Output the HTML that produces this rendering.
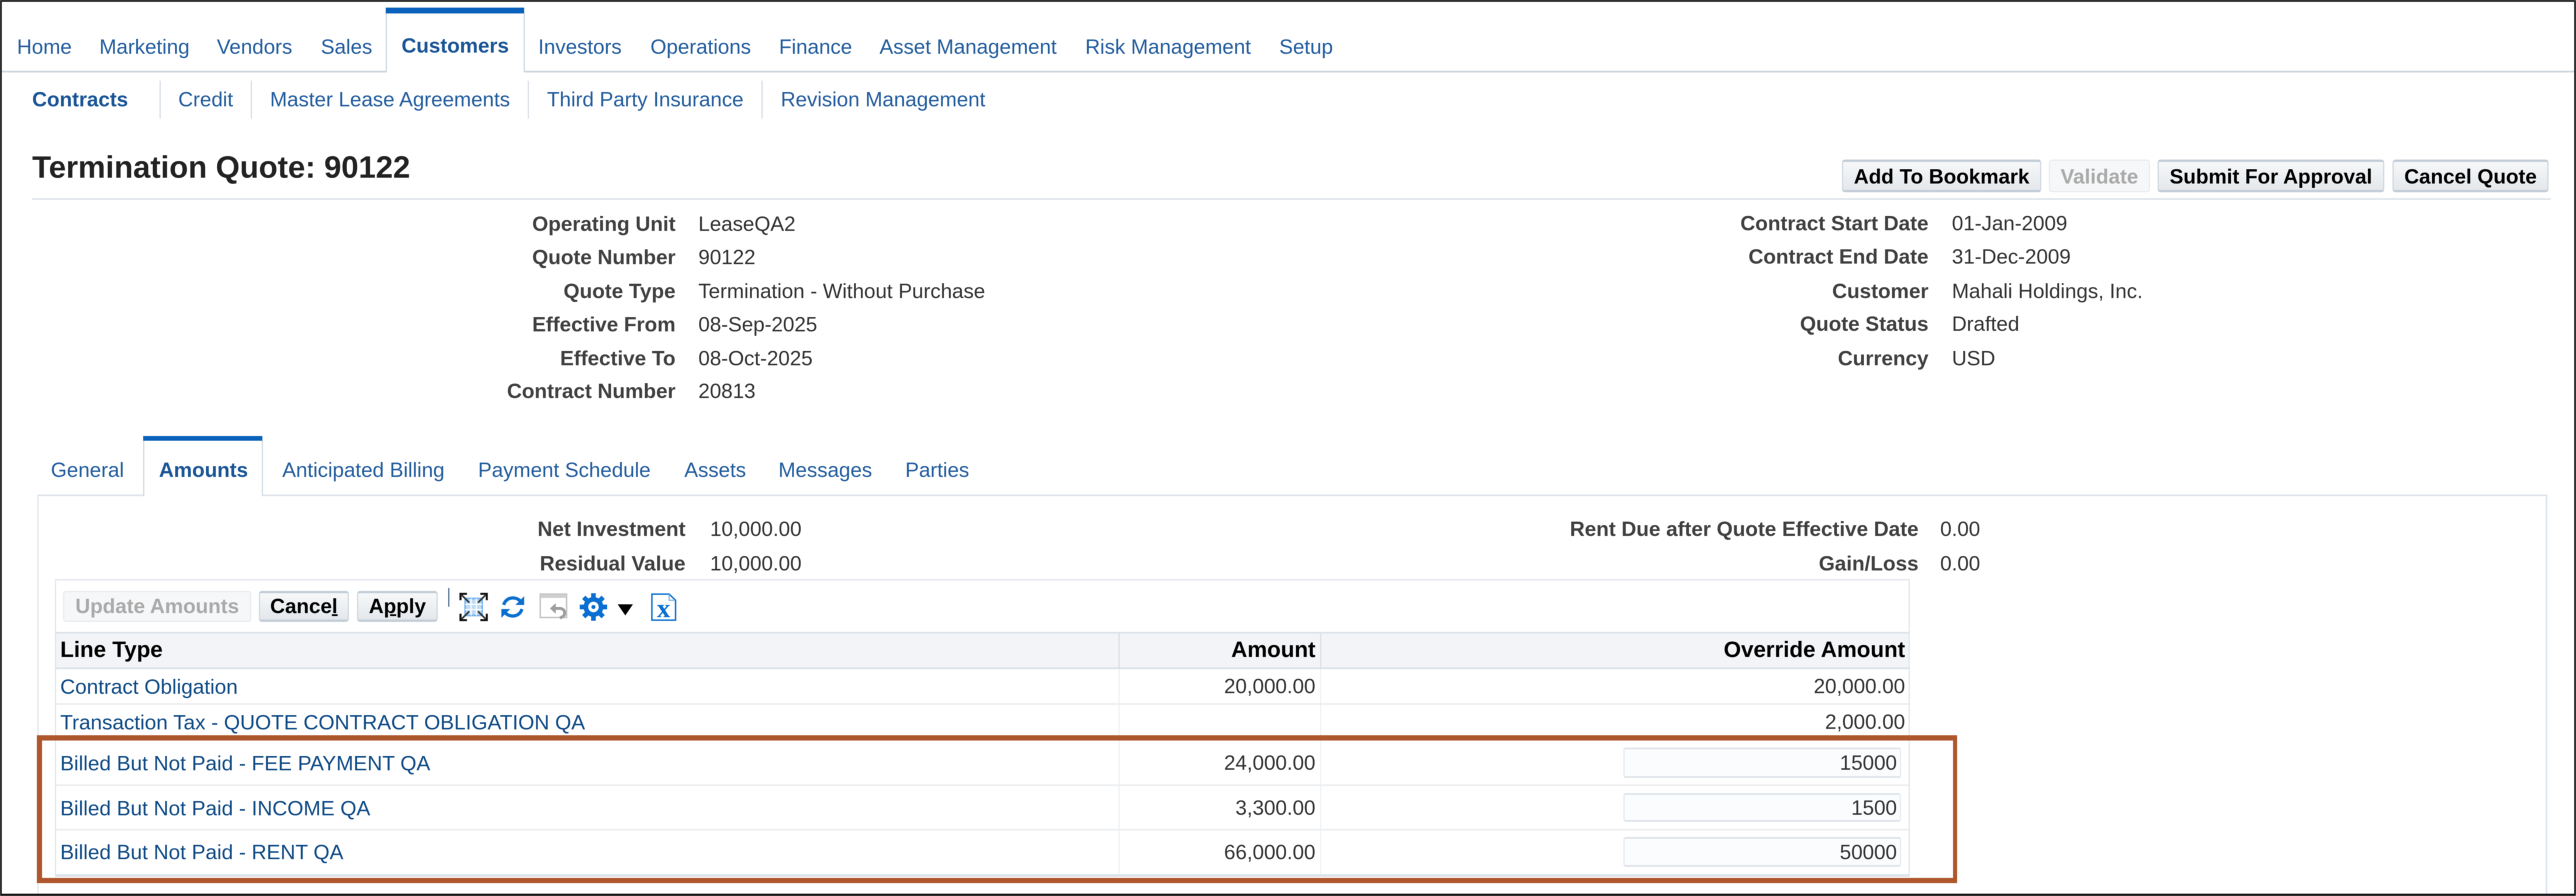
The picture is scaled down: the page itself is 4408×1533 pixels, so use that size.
<!DOCTYPE html>
<html>
<head>
<meta charset="utf-8">
<style>
html,body{margin:0;padding:0;background:#fff;}
body{width:4408px;height:1533px;overflow:hidden;position:relative;}
#w{position:absolute;left:0;top:0;width:4408px;height:1533px;background:#fff;overflow:hidden;filter:blur(.6px);font-family:"Liberation Sans",Arial,sans-serif;}
.t{position:absolute;white-space:nowrap;line-height:0;font-size:35.2px;color:#333;}
.b{font-weight:bold;}
.l{color:#235d9e;}
.lb{color:#1a5596;font-weight:bold;}
.k{color:#404040;font-weight:bold;text-align:right;font-size:35.35px;}
.r{text-align:right;}
.h{color:#000;font-weight:bold;}
.hh{color:#000;font-weight:bold;font-size:38.2px;}
.d{color:#0f4a85;font-size:35.5px;}
.x{position:absolute;}
.btn{position:absolute;box-sizing:border-box;border:2px solid #cfd7df;border-top:4px solid #c3cdd7;border-bottom:4px solid #c3cdd7;border-radius:5px;background:linear-gradient(#f6f8f9,#e4e8ec);}
.dis{background:#f6f7f8;border:2px solid #e8ebee;}
.inp{position:absolute;box-sizing:border-box;left:2778px;width:475px;background:#fbfcfe;border:2px solid #e6eaef;border-top:3px solid #dfe4ea;border-bottom:3px solid #dfe4ea;border-radius:4px;}
</style>
</head>
<body>
<div id="w">
<!-- top nav lines -->
<div class="x" style="left:3px;top:121px;width:657px;height:3px;background:#cdd6df"></div>
<div class="x" style="left:897px;top:121px;width:3508px;height:3px;background:#cdd6df"></div>
<div class="x" style="left:660px;top:13px;width:237px;height:10px;background:#0a62bd"></div>
<div class="x" style="left:660px;top:23px;width:2px;height:101px;background:#cdd6df"></div>
<div class="x" style="left:896px;top:23px;width:2px;height:101px;background:#cdd6df"></div>

<div class="t l" style="left:29px;top:81px">Home</div>
<div class="t l" style="left:170px;top:81px">Marketing</div>
<div class="t l" style="left:371px;top:81px">Vendors</div>
<div class="t l" style="left:549px;top:81px">Sales</div>
<div class="t lb" style="left:687px;top:79px">Customers</div>
<div class="t l" style="left:921px;top:81px">Investors</div>
<div class="t l" style="left:1113px;top:81px">Operations</div>
<div class="t l" style="left:1333px;top:81px">Finance</div>
<div class="t l" style="left:1505px;top:81px">Asset Management</div>
<div class="t l" style="left:1857px;top:81px">Risk Management</div>
<div class="t l" style="left:2189px;top:81px">Setup</div>

<!-- sub nav -->
<div class="t lb" style="left:55px;top:171px">Contracts</div>
<div class="x" style="left:273px;top:138px;width:2px;height:65px;background:#d5dce4"></div>
<div class="t l" style="left:305px;top:171px">Credit</div>
<div class="x" style="left:429px;top:138px;width:2px;height:65px;background:#d5dce4"></div>
<div class="t l" style="left:462px;top:171px">Master Lease Agreements</div>
<div class="x" style="left:903px;top:138px;width:2px;height:65px;background:#d5dce4"></div>
<div class="t l" style="left:936px;top:171px">Third Party Insurance</div>
<div class="x" style="left:1303px;top:138px;width:2px;height:65px;background:#d5dce4"></div>
<div class="t l" style="left:1336px;top:171px">Revision Management</div>

<!-- title -->
<div class="t b" style="left:55px;top:287px;font-size:53px;color:#222">Termination Quote: 90122</div>
<div class="x" style="left:55px;top:339px;width:4310px;height:3px;background:#e0e6ed"></div>

<!-- top buttons -->
<div class="btn" style="left:3152px;top:273px;width:341px;height:56px"></div>
<div class="t h" style="left:3152px;width:341px;text-align:center;top:303px">Add To Bookmark</div>
<div class="btn dis" style="left:3506px;top:273px;width:173px;height:56px"></div>
<div class="t b" style="left:3506px;width:173px;text-align:center;top:303px;color:#aaa">Validate</div>
<div class="btn" style="left:3692px;top:273px;width:388px;height:56px"></div>
<div class="t h" style="left:3692px;width:388px;text-align:center;top:303px">Submit For Approval</div>
<div class="btn" style="left:4094px;top:273px;width:267px;height:56px"></div>
<div class="t h" style="left:4094px;width:267px;text-align:center;top:303px">Cancel Quote</div>

<!-- left info -->
<div class="t k" style="right:3252px;top:384px">Operating Unit</div>
<div class="t" style="left:1195px;top:384px">LeaseQA2</div>
<div class="t k" style="right:3252px;top:441px">Quote Number</div>
<div class="t" style="left:1195px;top:441px">90122</div>
<div class="t k" style="right:3252px;top:499px">Quote Type</div>
<div class="t" style="left:1195px;top:499px">Termination - Without Purchase</div>
<div class="t k" style="right:3252px;top:556px">Effective From</div>
<div class="t" style="left:1195px;top:556px">08-Sep-2025</div>
<div class="t k" style="right:3252px;top:614px">Effective To</div>
<div class="t" style="left:1195px;top:614px">08-Oct-2025</div>
<div class="t k" style="right:3252px;top:670px">Contract Number</div>
<div class="t" style="left:1195px;top:670px">20813</div>

<!-- right info -->
<div class="t k" style="right:1108px;top:383px">Contract Start Date</div>
<div class="t" style="left:3340px;top:383px">01-Jan-2009</div>
<div class="t k" style="right:1108px;top:440px">Contract End Date</div>
<div class="t" style="left:3340px;top:440px">31-Dec-2009</div>
<div class="t k" style="right:1108px;top:499px">Customer</div>
<div class="t" style="left:3340px;top:499px">Mahali Holdings, Inc.</div>
<div class="t k" style="right:1108px;top:555px">Quote Status</div>
<div class="t" style="left:3340px;top:555px">Drafted</div>
<div class="t k" style="right:1108px;top:614px">Currency</div>
<div class="t" style="left:3340px;top:614px">USD</div>

<!-- tabs -->
<div class="x" style="left:64px;top:846px;width:181px;height:3px;background:#dfe5ec"></div>
<div class="x" style="left:449px;top:846px;width:3909px;height:3px;background:#dfe5ec"></div>
<div class="x" style="left:245px;top:746px;width:204px;height:8px;background:#0a62bd"></div>
<div class="x" style="left:245px;top:754px;width:2px;height:95px;background:#cfd8e2"></div>
<div class="x" style="left:448px;top:754px;width:2px;height:95px;background:#cfd8e2"></div>
<div class="x" style="left:64px;top:846px;width:2px;height:684px;background:#dfe5ec"></div>
<div class="x" style="left:4356px;top:846px;width:3px;height:684px;background:#dfe5ec"></div>

<div class="t l" style="left:87px;top:805px">General</div>
<div class="t lb" style="left:272px;top:805px">Amounts</div>
<div class="t l" style="left:483px;top:805px">Anticipated Billing</div>
<div class="t l" style="left:818px;top:805px">Payment Schedule</div>
<div class="t l" style="left:1171px;top:805px">Assets</div>
<div class="t l" style="left:1332px;top:805px">Messages</div>
<div class="t l" style="left:1549px;top:805px">Parties</div>

<!-- amounts summary -->
<div class="t k" style="right:3235px;top:906px">Net Investment</div>
<div class="t" style="left:1215px;top:906px">10,000.00</div>
<div class="t k" style="right:3235px;top:965px">Residual Value</div>
<div class="t" style="left:1215px;top:965px">10,000.00</div>
<div class="t k" style="right:1125px;top:906px">Rent Due after Quote Effective Date</div>
<div class="t" style="left:3320px;top:906px">0.00</div>
<div class="t k" style="right:1125px;top:965px">Gain/Loss</div>
<div class="t" style="left:3320px;top:965px">0.00</div>

<!-- table frame -->
<div class="x" style="left:94px;top:991px;width:3174px;height:2px;background:#dfe5ec"></div>
<div class="x" style="left:94px;top:991px;width:2px;height:509px;background:#dfe5ec"></div>
<div class="x" style="left:3266px;top:991px;width:2px;height:509px;background:#dfe5ec"></div>
<div class="x" style="left:96px;top:1082px;width:3170px;height:61px;background:#f2f4f7"></div>
<div class="x" style="left:94px;top:1081px;width:3174px;height:3px;background:#dde3ea"></div>
<div class="x" style="left:94px;top:1142px;width:3174px;height:3px;background:#dbe1e8"></div>
<div class="x" style="left:1914px;top:1082px;width:2px;height:61px;background:#d8dfe6"></div>
<div class="x" style="left:2259px;top:1082px;width:2px;height:61px;background:#d8dfe6"></div>
<div class="x" style="left:1914px;top:1145px;width:2px;height:353px;background:#eef0f3"></div>
<div class="x" style="left:2259px;top:1145px;width:2px;height:353px;background:#eef0f3"></div>
<div class="x" style="left:96px;top:1203px;width:3170px;height:3px;background:#eceef1"></div>
<div class="x" style="left:96px;top:1342px;width:3170px;height:3px;background:#eceef1"></div>
<div class="x" style="left:96px;top:1418px;width:3170px;height:3px;background:#eceef1"></div>
<div class="x" style="left:94px;top:1496px;width:3174px;height:4px;background:#dbe1e8"></div>

<!-- toolbar -->
<div class="btn dis" style="left:108px;top:1011px;width:322px;height:53px"></div>
<div class="t b" style="left:108px;width:322px;text-align:center;top:1038px;color:#aaa">Update Amounts</div>
<div class="btn" style="left:443px;top:1011px;width:154px;height:53px"></div>
<div class="t h" style="left:443px;width:154px;text-align:center;top:1038px">Cance<u>l</u></div>
<div class="btn" style="left:611px;top:1011px;width:138px;height:53px"></div>
<div class="t h" style="left:611px;width:138px;text-align:center;top:1038px">A<u>p</u>ply</div>
<div class="x" style="left:767px;top:1006px;width:2px;height:32px;background:#46688f"></div>

<svg class="x" style="left:0;top:0" width="4408" height="1533" viewBox="0 0 4408 1533">
  <!-- expand -->
  <rect x="796" y="1024" width="29" height="29" fill="#bfdcf7" stroke="#7ab6ef" stroke-width="3"/>
  <path d="M796 1034H825M796 1043H825M806 1024V1053M815 1024V1053" stroke="#fff" stroke-width="2" fill="none"/>
  <path d="M788 1027V1016H799M833 1027V1016H822M788 1050V1061H799M833 1050V1061H822" stroke="#111" stroke-width="3.5" fill="none"/>
  <path d="M790 1018L803 1031M831 1018L818 1031M790 1059L803 1046M831 1059L818 1046" stroke="#333" stroke-width="3" fill="none"/>
  <!-- refresh -->
  <path d="M862 1035C865 1022 882 1019 891 1029" stroke="#0a6fd0" stroke-width="5.5" fill="none"/>
  <polygon points="897,1020 897,1035 882,1035" fill="#0a6fd0"/>
  <path d="M893 1042C890 1055 873 1058 864 1048" stroke="#0a6fd0" stroke-width="5.5" fill="none"/>
  <polygon points="858,1057 858,1042 873,1042" fill="#0a6fd0"/>
  <!-- revert -->
  <rect x="924.5" y="1016.5" width="45" height="40" fill="#fff" stroke="#c4c4c4" stroke-width="2.5"/>
  <rect x="925" y="1017" width="44" height="6" fill="#cfcfcf"/>
  <path d="M948 1041H958C968 1041 970 1055 958 1057" stroke="#9e9e9e" stroke-width="5" fill="none"/>
  <polygon points="941,1041 951,1032 951,1050" fill="#9e9e9e"/>
  <!-- gear -->
  <g stroke="#0a6fd0" fill="none">
    <circle cx="1015.5" cy="1038.5" r="13" stroke-width="8"/>
    <path stroke-width="8" d="M1015.5 1023.5V1015M1015.5 1053.5V1062M1000.5 1038.5H992M1030.5 1038.5H1039M1004.9 1027.9L998.9 1021.9M1026.1 1027.9L1032.1 1021.9M1004.9 1049.1L998.9 1055.1M1026.1 1049.1L1032.1 1055.1"/>
  </g>
  <circle cx="1015.5" cy="1038.5" r="3.5" fill="#0a6fd0"/>
  <polygon points="1057,1034 1083,1034 1070,1053" fill="#000"/>
  <!-- excel -->
  <path d="M1115.5 1016.5H1145L1156 1027V1061H1115.5Z" fill="#fff" stroke="#0a6fd0" stroke-width="2.5"/>
  <path d="M1145 1017V1027H1155" fill="none" stroke="#7ab6ef" stroke-width="2"/>
  <text x="1135.5" y="1056" text-anchor="middle" font-family="Liberation Serif" font-weight="bold" font-size="46" fill="#0a6fd0">x</text>
</svg>

<!-- header text -->
<div class="t hh" style="left:103px;top:1112px">Line Type</div>
<div class="t hh r" style="right:2157px;top:1112px">Amount</div>
<div class="t hh r" style="right:1148px;top:1112px">Override Amount</div>

<!-- rows -->
<div class="t d" style="left:103px;top:1175px">Contract Obligation</div>
<div class="t r" style="right:2157px;top:1175px">20,000.00</div>
<div class="t r" style="right:1148px;top:1175px">20,000.00</div>

<div class="t d" style="left:103px;top:1236px">Transaction Tax - QUOTE CONTRACT OBLIGATION QA</div>
<div class="t r" style="right:1148px;top:1236px">2,000.00</div>

<div class="t d" style="left:103px;top:1306px">Billed But Not Paid - FEE PAYMENT QA</div>
<div class="t r" style="right:2157px;top:1306px">24,000.00</div>
<div class="inp" style="top:1279px;height:52px"></div>
<div class="t r" style="right:1162px;top:1306px">15000</div>

<div class="t d" style="left:103px;top:1383px">Billed But Not Paid - INCOME QA</div>
<div class="t r" style="right:2157px;top:1383px">3,300.00</div>
<div class="inp" style="top:1357px;height:49px"></div>
<div class="t r" style="right:1162px;top:1383px">1500</div>

<div class="t d" style="left:103px;top:1458px">Billed But Not Paid - RENT QA</div>
<div class="t r" style="right:2157px;top:1459px">66,000.00</div>
<div class="inp" style="top:1432px;height:51px"></div>
<div class="t r" style="right:1162px;top:1459px">50000</div>

<!-- orange highlight box -->
<div class="x" style="left:63px;top:1258px;width:3286px;height:253px;box-sizing:border-box;border:9px solid #ae572d;border-right-width:7px"></div>

<!-- outer black frame -->
<div class="x" style="left:0;top:0;width:4408px;height:1533px;box-sizing:border-box;border:3px solid #111;border-bottom-width:4px"></div>
</div>
</body>
</html>
